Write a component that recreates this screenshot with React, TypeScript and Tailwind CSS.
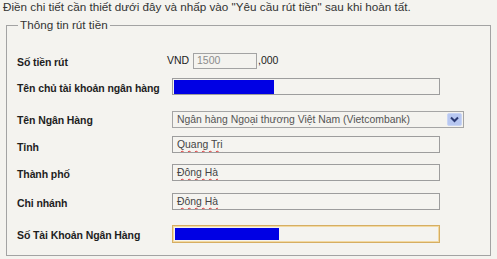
import React from "react";

function Box({ w, children, h = "h-[17px]" }: { w: string; children?: React.ReactNode; h?: string }) {
  return (
    <div className={`${w} ${h} border border-[#9d9d9d] bg-[#f5f4f0] flex items-center pl-[4px] overflow-hidden text-[10.4px]`}>
      {children}
    </div>
  );
}

function Squiggle({ children }: { children: React.ReactNode }) {
  return (
    <span className="underline decoration-wavy decoration-[#e03030] decoration-[1px] underline-offset-[2px] text-[#444]">
      {children}
    </span>
  );
}

function Label({ w = "w-[155px]", pt, children }: { w?: string; pt: string; children: React.ReactNode }) {
  return <span className={`${w} ${pt} font-bold text-[10.5px] tracking-[-0.1px] whitespace-nowrap`}>{children}</span>;
}

export default function App() {
  return (
    <div className="w-[497px] h-[259px] bg-[#f4f3ef] overflow-hidden text-[#1e1e1e] font-['Liberation_Sans',Arial,sans-serif]">
      <p className="pl-[3px] text-[11.7px] leading-[14px] text-[#333] whitespace-nowrap">
        Điền chi tiết cần thiết dưới đây và nhấp vào "Yêu cầu rút tiền" sau khi hoàn tất.
      </p>
      <fieldset className="ml-[6px] mt-[4px] w-[485px] border border-[#a3a3a3] pl-[10px] pb-[12px]">
        <legend className="ml-[1px] px-[2px] text-[11.7px] leading-[14px] text-[#333]">Thông tin rút tiền</legend>

        <div className="mt-[21px] flex items-center h-[16px] text-[10.5px]">
          <Label w="w-[150px]" pt="pt-[3px]">Số tiền rút</Label>
          <span className="w-[26px] text-[#222]">VND</span>
          <div className="w-[64px] h-[16px] border border-[#a3a3a3] flex items-center pl-[3px] text-[#8c8c8c]">1500</div>
          <span className="ml-[1px] text-[#222]">,000</span>
        </div>

        <div className="mt-[9px] flex items-center h-[17px]">
          <Label pt="pt-[4px]">Tên chủ tài khoản ngân hàng</Label>
          <div className="w-[268px] h-[17px] border border-[#9d9d9d] flex items-center pl-[1px]">
            <div className="w-[100px] h-[14px] bg-[#0000e4]" />
          </div>
        </div>

        <div className="mt-[16px] flex items-center h-[17px]">
          <Label pt="pt-[3px]">Tên Ngân Hàng</Label>
          <div className="w-[292px] h-[17px] border border-[#a5a5a5] flex items-center justify-between pl-[4px] pr-[1px] text-[#555] text-[10.4px]">
            <span className="whitespace-nowrap">Ngân hàng Ngoại thương Việt Nam (Vietcombank)</span>
            <div className="w-[15px] h-[13px] rounded-[2px] bg-[#b7c7f1] border border-[#c9d5f5] flex items-center justify-center">
              <svg width="9" height="7" viewBox="0 0 9 7">
                <polyline points="1,1.5 4.5,5 8,1.5" fill="none" stroke="#2b3a73" strokeWidth="2" />
              </svg>
            </div>
          </div>
        </div>

        <div className="mt-[8px] flex items-center h-[17px]">
          <Label pt="pt-[6px]">Tỉnh</Label>
          <Box w="w-[268px]">
            <Squiggle>Quang Tri</Squiggle>
          </Box>
        </div>

        <div className="mt-[11px] flex items-center h-[17px]">
          <Label pt="pt-[5px]">Thành phố</Label>
          <Box w="w-[268px]">
            <Squiggle>Đông Hà</Squiggle>
          </Box>
        </div>

        <div className="mt-[12px] flex items-center h-[17px]">
          <Label pt="pt-[5px]">Chi nhánh</Label>
          <Box w="w-[268px]">
            <Squiggle>Đông Hà</Squiggle>
          </Box>
        </div>

        <div className="mt-[15px] flex items-center h-[18px]">
          <Label pt="pt-[3px]">Số Tài Khoản Ngân Hàng</Label>
          <div className="w-[268px] h-[18px] border border-[#d6ae62] shadow-[inset_0_0_0_1px_#f2d9a2] flex items-center pl-[2px]">
            <div className="w-[104px] h-[12px] bg-[#0000e4]" />
          </div>
        </div>
      </fieldset>
    </div>
  );
}
